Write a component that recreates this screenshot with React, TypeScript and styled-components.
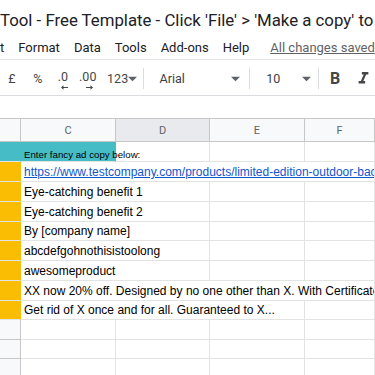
import React from 'react';
import { styled, createGlobalStyle } from 'styled-components';

const Global = createGlobalStyle`
html, body {
    margin: 0;
    padding: 0;
    background: #ffffff;
    overflow: hidden;
}
#root {
    width: 375px;
    height: 375px;
    overflow: hidden;
}
`;

const Page = styled.div`
width: 375px;
height: 375px;
overflow: hidden;
display: flex;
flex-direction: column;
font-family: Roboto, "Liberation Sans", Arial, sans-serif;
color: #202124;
& > * {
    flex-shrink: 0;
}
`;

const TitleBar = styled.div`
height: 36px;
display: flex;
align-items: center;
padding-top: 4px;
box-sizing: border-box;
white-space: nowrap;
font-family: Roboto, sans-serif;
font-size: 16.8px;
color: #202124;
`;

const MenuBar = styled.div`
height: 23px;
display: flex;
align-items: center;
gap: 14px;
white-space: nowrap;
font-size: 13px;
border-bottom: 1px solid #e4e5e7;
`;

const MenuItem = styled.span<{ $saved?: boolean }>`
color: ${p => (p.$saved ? '#5f6368' : '#202124')};
text-decoration: ${p => (p.$saved ? 'underline' : 'none')};
margin-left: ${p => (p.$saved ? '7px' : '0')};
`;

const Toolbar = styled.div`
height: 36px;
display: flex;
align-items: center;
padding-top: 2px;
box-sizing: border-box;
border-bottom: 1px solid #dadce0;
white-space: nowrap;
color: #444746;
font-size: 12.5px;
`;

const ToolText = styled.span<{ $w: number }>`
width: ${p => p.$w}px;
display: inline-flex;
align-items: center;
justify-content: center;
font-size: 12.5px;
color: #444746;
`;

const DecBtn = styled.span<{ $w: number }>`
width: ${p => p.$w}px;
position: relative;
display: inline-flex;
justify-content: center;
font-size: 12.5px;
line-height: 1;
padding-bottom: 3px;
`;

const SmallArrow = styled.svg`
position: absolute;
bottom: -4px;
left: 50%;
margin-left: -2px;
`;

const Sep = styled.div`
width: 1px;
height: 21px;
background: #dadce0;
`;

const Select = styled.div<{ $w: number; $pr: number }>`
width: ${p => p.$w}px;
display: flex;
align-items: center;
justify-content: space-between;
padding: 0 ${p => p.$pr}px 0 16px;
box-sizing: border-box;
font-size: 12.5px;
color: #3c4043;
`;

const Caret = () => (
    <svg width="9" height="9" viewBox="7 7 10 10">
        <path d="M7 10l5 5 5-5z" fill="#5f6368" />
    </svg>
);

const BoldBtn = styled.span`
width: 32px;
display: inline-flex;
justify-content: center;
font-weight: 700;
font-size: 16px;
color: #444746;
`;

const FormulaBar = styled.div`
height: 22px;
border-bottom: 1px solid #c7c7c7;
`;

const Grid = styled.div`
display: flex;
flex-direction: column;
font-family: "Liberation Sans", Arial, sans-serif;
`;

const Row = styled.div<{ $h: number }>`
display: grid;
flex-shrink: 0;
grid-template-columns: 21px 95px 94px 95px 1fr;
height: ${p => p.$h}px;
`;

const HeadCell = styled.div<{ $active?: boolean }>`
display: flex;
align-items: center;
justify-content: center;
background: ${p => (p.$active ? '#e8eaed' : '#f8f9fa')};
border-right: 1px solid #c7c7c7;
border-bottom: 1px solid #c7c7c7;
font-family: Roboto, sans-serif;
font-size: 11px;
color: #5f6368;
`;

const RowHead = styled.div<{ $fill?: string }>`
background: ${p => p.$fill || '#f8f9fa'};
border-right: 1px solid ${p => p.$fill || '#c7c7c7'};
border-bottom: 1px solid ${p => p.$fill ? '#e2e3e3' : '#c7c7c7'};
box-sizing: border-box;
`;

const Cell = styled.div<{ $span?: number; $fill?: string; $open?: boolean; $small?: boolean; $link?: boolean }>`
grid-column: span ${p => p.$span || 1};
background: ${p => p.$fill || 'transparent'};
border-right: 1px solid ${p => (p.$open || p.$fill ? 'transparent' : '#e2e3e3')};
border-bottom: 1px solid #e2e3e3;
box-sizing: border-box;
display: flex;
align-items: flex-end;
padding: 0 0 ${p => (p.$small ? '1px' : '2px')} 3px;
white-space: nowrap;
overflow: ${p => (p.$open ? 'visible' : 'hidden')};
font-size: ${p => (p.$small ? '9.7px' : '12px')};
color: ${p => (p.$link ? '#1155cc' : '#000000')};
text-decoration: ${p => (p.$link ? 'underline' : 'none')};
position: relative;
z-index: ${p => (p.$open ? 1 : 0)};
`;

type Line = { text: string; span: number; link?: boolean };

const lines: Line[] = [
    { text: 'https://www.testcompany.com/products/limited-edition-outdoor-backpack', span: 4, link: true },
    { text: 'Eye-catching benefit 1', span: 2 },
    { text: 'Eye-catching benefit 2', span: 2 },
    { text: 'By [company name]', span: 2 },
    { text: 'abcdefgohnothisistoolong', span: 2 },
    { text: 'awesomeproduct', span: 2 },
    { text: 'XX now 20% off. Designed by no one other than X. With Certificate', span: 4 },
    { text: 'Get rid of X once and for all. Guaranteed to X...', span: 3 },
];

const heights = [20, 20, 20, 19, 20, 20, 20, 19];
const emptyHeights = [20, 19, 20];

const YELLOW = '#fbbc04';
const TEAL = '#46bdc6';

const App = () => {
    return (
        <Page>
            <Global />
            <TitleBar>Tool - Free Template - Click 'File' &gt; 'Make a copy' to</TitleBar>
            <MenuBar>
                <MenuItem>t</MenuItem>
                <MenuItem>Format</MenuItem>
                <MenuItem>Data</MenuItem>
                <MenuItem>Tools</MenuItem>
                <MenuItem>Add-ons</MenuItem>
                <MenuItem>Help</MenuItem>
                <MenuItem $saved>All changes saved</MenuItem>
            </MenuBar>
            <Toolbar>
                <ToolText $w={24}>£</ToolText>
                <ToolText $w={28}>%</ToolText>
                <DecBtn $w={22}>
                    .0
                    <SmallArrow width="7" height="5" viewBox="0 0 7 5">
                        <path d="M0 2.5L2.5 0.3V1.9H7V3.1H2.5V4.7Z" fill="#444746" />
                    </SmallArrow>
                </DecBtn>
                <DecBtn $w={28}>
                    .00
                    <SmallArrow width="7" height="5" viewBox="0 0 7 5">
                        <path d="M7 2.5L4.5 0.3V1.9H0V3.1H4.5V4.7Z" fill="#444746" />
                    </SmallArrow>
                </DecBtn>
                <ToolText $w={41}>123<Caret /></ToolText>
                <Sep />
                <Select $w={106} $pr={9}>Arial<Caret /></Select>
                <Sep />
                <Select $w={68} $pr={7}>10<Caret /></Select>
                <Sep />
                <BoldBtn>B</BoldBtn>
                <ToolText $w={24}>
                    <svg width="13" height="13" viewBox="4 4 16 16">
                        <path d="M10 4v3h2.21l-3.42 8H6v3h8v-3h-2.21l3.42-8H18V4z" fill="#444746" />
                    </svg>
                </ToolText>
            </Toolbar>
            <FormulaBar />
            <Grid>
                <Row $h={23}>
                    <HeadCell />
                    <HeadCell>C</HeadCell>
                    <HeadCell $active>D</HeadCell>
                    <HeadCell>E</HeadCell>
                    <HeadCell>F</HeadCell>
                </Row>
                <Row $h={20}>
                    <RowHead $fill={TEAL} />
                    <Cell $fill={TEAL} $open $small>Enter fancy ad copy below:</Cell>
                    <Cell />
                    <Cell />
                    <Cell />
                </Row>
                {lines.map((line, i) => (
                    <Row key={i} $h={heights[i]}>
                        <RowHead $fill={YELLOW} />
                        <Cell $span={line.span} $link={line.link}>{line.text}</Cell>
                        {Array.from({ length: 4 - line.span }).map((_, j) => (
                            <Cell key={j} />
                        ))}
                    </Row>
                ))}
                {emptyHeights.map((h, i) => (
                    <Row key={'e' + i} $h={h}>
                        <RowHead />
                        <Cell />
                        <Cell />
                        <Cell />
                        <Cell />
                    </Row>
                ))}
            </Grid>
        </Page>
    );
};

export default App;
